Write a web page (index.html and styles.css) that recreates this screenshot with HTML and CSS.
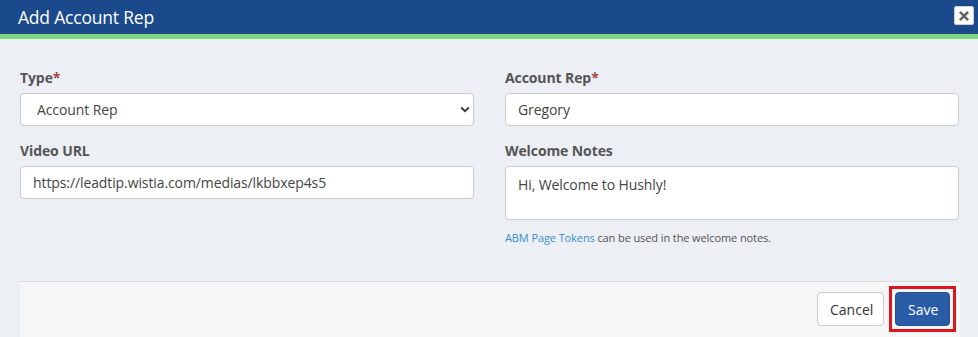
FILE: index.html
```html
<!DOCTYPE html>
<html>
<head>
<meta charset="utf-8">
<link rel="stylesheet" href="styles.css">
</head>
<body>
<div class="modal">
  <div class="modal-header">
    <h1 class="modal-title">Add Account Rep</h1>
    <button class="close-btn" aria-label="Close">
      <svg width="10" height="10" viewBox="0 0 10 10"><path d="M1.8 1.8 L8.2 8.2 M8.2 1.8 L1.8 8.2" stroke="#666" stroke-width="2.6" stroke-linecap="square"/></svg>
    </button>
  </div>
  <div class="modal-body">
    <div class="form-grid">
      <div class="field">
        <label class="label">Type<span class="req">*</span></label>
        <div class="select">
          <span class="select-value">Account Rep</span>
          <svg class="chev" width="10" height="7" viewBox="0 0 10 7"><path d="M1.2 1.5 L5 5.2 L8.8 1.5" fill="none" stroke="#333" stroke-width="1.8"/></svg>
        </div>
      </div>
      <div class="field">
        <label class="label">Account Rep<span class="req">*</span></label>
        <div class="input">Gregory</div>
      </div>
      <div class="field">
        <label class="label">Video URL</label>
        <div class="input">https://leadtip.wistia.com/medias/lkbbxep4s5</div>
      </div>
      <div class="field">
        <label class="label">Welcome Notes</label>
        <div class="input textarea">Hi, Welcome to Hushly!</div>
        <p class="help"><a class="link">ABM Page Tokens</a> can be used in the welcome notes.</p>
      </div>
    </div>
  </div>
  <div class="modal-footer">
    <button class="btn btn-default">Cancel</button>
    <span class="highlight"><button class="btn btn-primary">Save</button></span>
  </div>
</div>
</body>
</html>
```
FILE: styles.css
```css
* { box-sizing: border-box; }
html, body { margin: 0; padding: 0; }
body {
  background: #eceff3;
  font-family: "Open Sans", "Noto Sans", sans-serif;
  color: #555;
  width: 978px;
  height: 337px;
  overflow: hidden;
}
.modal-header {
  height: 39px;
  background: #1a4a8c;
  border-bottom: 5px solid #7ed67f;
  display: flex;
  align-items: flex-start;
  justify-content: space-between;
  padding: 0 4px 0 18px;
}
.modal-title {
  margin: 0;
  font-size: 17.5px;
  font-weight: 400;
  color: #fff;
  line-height: 34px;
  letter-spacing: -0.2px;
}
.close-btn {
  margin-top: 6px;
  width: 20px;
  height: 19px;
  background: #fff;
  border: 1px solid #ccc;
  border-radius: 2px;
  padding: 0;
  display: flex;
  align-items: center;
  justify-content: center;
}
.modal-body {
  padding: 29px 19px 0 20px;
}
.form-grid {
  display: grid;
  grid-template-columns: 454px 454px;
  column-gap: 31px;
  row-gap: 15px;
  align-items: start;
}
.field { display: flex; flex-direction: column; }
.label {
  font-size: 14px;
  font-weight: 700;
  line-height: 20px;
  margin-bottom: 5px;
  color: #555;
  letter-spacing: -0.1px;
}
.req { color: #a94442; }
.select, .input {
  height: 33px;
  background: #fff;
  border: 1px solid #ccc;
  border-radius: 4px;
  font-size: 14px;
  color: #444;
  display: flex;
  align-items: center;
  padding: 0 12px;
  letter-spacing: -0.1px;
}
.select { padding: 0 3px 0 16px; justify-content: space-between; }
.input.textarea {
  height: 54px;
  align-items: flex-start;
  padding-top: 8px;
}
.help {
  margin: 10px 0 0;
  font-size: 11px;
  line-height: 16px;
  color: #555;
  letter-spacing: -0.1px;
}
.link { color: #3a91c5; }
.modal-footer {
  margin: 35px 18px 0 20px;
  height: 56px;
  background: #f6f6f6;
  border-top: 1px solid #d6dadf;
  display: flex;
  justify-content: flex-end;
  align-items: flex-start;
  padding: 4px 4px 0 0;
}
.btn {
  height: 34px;
  font-family: inherit;
  font-size: 14px;
  border-radius: 4px;
  padding: 0 12px;
  cursor: pointer;
}
.btn-default {
  margin-top: 6px;
  width: 67px;
  background: #fff;
  border: 1px solid #ccc;
  color: #333;
}
.highlight {
  margin-left: 5px;
  border: 3px solid #e0141e;
  padding: 3px;
  display: flex;
}
.btn-primary {
  width: 55px;
  background: #2a5ba6;
  border: 1px solid #234f91;
  color: #fff;
}
```
